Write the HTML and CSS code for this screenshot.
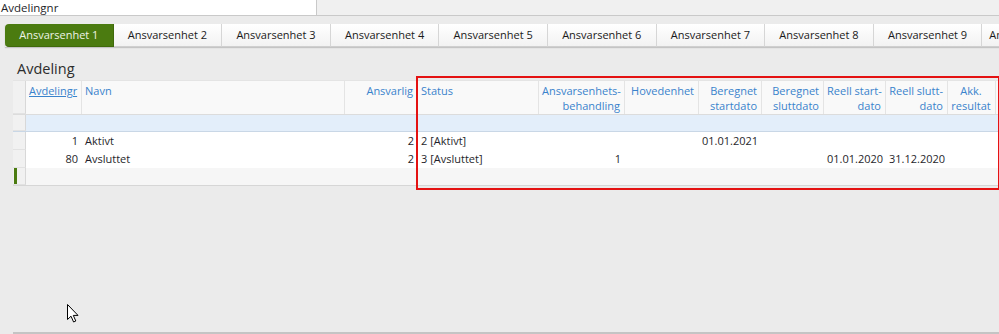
FILE: index.html
```html
<!DOCTYPE html>
<html lang="no">
<head>
    <meta charset="UTF-8">
    <title>Avdeling</title>
    <link rel="stylesheet" href="styles.css">
</head>
<body>
    <div class="topbar">
        <div class="field">Avdelingnr</div>
        <div class="field-rest"></div>
    </div>

    <div class="tabs">
        <div class="tab active">Ansvarsenhet 1</div>
        <div class="tab">Ansvarsenhet 2</div>
        <div class="tab">Ansvarsenhet 3</div>
        <div class="tab">Ansvarsenhet 4</div>
        <div class="tab">Ansvarsenhet 5</div>
        <div class="tab">Ansvarsenhet 6</div>
        <div class="tab">Ansvarsenhet 7</div>
        <div class="tab">Ansvarsenhet 8</div>
        <div class="tab">Ansvarsenhet 9</div>
        <div class="tab last">Ansvarsenhet 10</div>
    </div>

    <h2 class="section-title">Avdeling</h2>

    <div class="grid">
        <div class="row head">
            <div class="rh"></div>
            <div class="c"><span class="link">Avdelingr</span></div>
            <div class="c">Navn</div>
            <div class="c r">Ansvarlig</div>
            <div class="c">Status</div>
            <div class="c r">Ansvarsenhets-<br>behandling</div>
            <div class="c r">Hovedenhet</div>
            <div class="c r">Beregnet<br>startdato</div>
            <div class="c r">Beregnet<br>sluttdato</div>
            <div class="c r">Reell start-<br>dato</div>
            <div class="c r">Reell slutt-<br>dato</div>
            <div class="c ctr">Akk.<br>resultat</div>
            <div class="c"></div>
        </div>
        <div class="row filter">
            <div class="rh"></div>
        </div>
        <div class="row data">
            <div class="rh"></div>
            <div class="c r">1</div>
            <div class="c">Aktivt</div>
            <div class="c r">2</div>
            <div class="c">2 [Aktivt]</div>
            <div class="c r"></div>
            <div class="c r"></div>
            <div class="c r">01.01.2021</div>
            <div class="c r"></div>
            <div class="c r"></div>
            <div class="c r"></div>
            <div class="c"></div>
            <div class="c"></div>
        </div>
        <div class="row data">
            <div class="rh"></div>
            <div class="c r">80</div>
            <div class="c">Avsluttet</div>
            <div class="c r">2</div>
            <div class="c">3 [Avsluttet]</div>
            <div class="c r">1</div>
            <div class="c r"></div>
            <div class="c r"></div>
            <div class="c r"></div>
            <div class="c r">01.01.2020</div>
            <div class="c r">31.12.2020</div>
            <div class="c"></div>
            <div class="c"></div>
        </div>
        <div class="row empty">
            <div class="rh"><span class="marker"></span></div>
        </div>
    </div>

    <div class="bottom-line"></div>

    <!-- annotation box drawn over the grid -->
    <div class="highlight"></div>

    <svg class="cursor" width="13" height="19" viewBox="0 0 13 19">
        <path d="M0.5 0.5 L0.5 15.5 L4 12.2 L6.6 18 L8.8 17 L6.3 11.4 L11 11.4 Z" fill="#fff" stroke="#000" stroke-width="1" stroke-linejoin="round"/>
    </svg>
</body>
</html>
```

FILE: styles.css
```css
body {
    margin: 0;
    background: #ebebeb;
    font-family: 'Open Sans', 'Noto Sans', sans-serif;
    font-size: 11px;
    color: #1f1f2b;
    height: 334px;
    overflow: hidden;
    position: relative;
}

.topbar {
    display: flex;
    height: 15px;
    border-bottom: 1px solid #c9c9c9;
}

.field {
    width: 315px;
    background: #ffffff;
    border-right: 1px solid #c9c9c9;
    padding-left: 1px;
    line-height: 15px;
    font-size: 11.5px;
}

.field-rest {
    flex: 1;
    background: #f0f0f0;
}

.tabs {
    display: flex;
    margin: 8px 0 0 5px;
    height: 23px;
    box-shadow: 0 1px 1px #c4c4c4;
    overflow: hidden;
}

.tab {
    flex: 0 0 108.6px;
    box-sizing: border-box;
    text-align: center;
    line-height: 22px;
    background: linear-gradient(#ffffff, #f2f2f2);
    border-right: 1px solid #d6d6d6;
    border-bottom: 1px solid #cfcfcf;
    color: #1a1a1a;
    white-space: nowrap;
    overflow: hidden;
}

.tab.last {
    text-align: left;
    padding-left: 7px;
}

.tab.active {
    background: #4b7b10;
    color: #eef3e6;
    border-radius: 4px 0 0 4px;
    border-color: #3f6a0b;
}

.section-title {
    margin: 13px 0 3px 17px;
    font-size: 14.5px;
    font-weight: normal;
    color: #2d2d2d;
    line-height: 17px;
}

.grid {
    margin-left: 13px;
    border-bottom: 1px solid #d6d6d6;
    background: #f6f6f6;
}

.row {
    display: grid;
    grid-template-columns: 13px 56px 263px 73px 121px 86px 74px 63px 62px 62px 62px 48px 1fr;
}

.rh {
    background: #f1f1f1;
    border-right: 1px solid #d8d8d8;
    border-bottom: 1px solid #e2e2e2;
    position: relative;
}

.c {
    padding: 0 4px 0 3px;
    white-space: nowrap;
    overflow: hidden;
}

.r {
    text-align: right;
}

.ctr {
    text-align: center;
}

.head {
    height: 33px;
    background: #f9f9f9;
    border-top: 1px solid #e4e4e4;
    border-bottom: 1px solid #dcdcdc;
    color: #3a83cc;
    line-height: 15px;
}

.head .c {
    padding-top: 2px;
    border-right: 1px solid #e4e4e4;
}

.link {
    text-decoration: underline;
}

.filter {
    height: 16px;
    background: #e3eefa;
    border-bottom: 1px solid #c9d7e6;
}

.data {
    height: 18px;
    line-height: 18px;
    background: #ffffff;
}

.empty {
    height: 17px;
    background: #f6f6f6;
}

.marker {
    position: absolute;
    left: 1px;
    top: 0;
    width: 3px;
    height: 100%;
    background: #4b7b10;
}

.bottom-line {
    position: absolute;
    left: 13px;
    right: 0;
    bottom: 0;
    height: 2px;
    background: #c4c4c4;
}

.highlight {
    position: absolute;
    left: 416px;
    top: 76px;
    width: 580px;
    height: 110px;
    border: 2px solid #e41212;
}

.cursor {
    position: absolute;
    left: 67px;
    top: 304px;
}
```
